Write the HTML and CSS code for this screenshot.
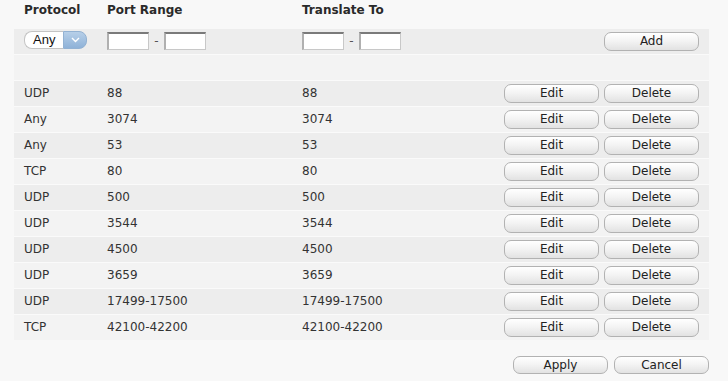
FILE: index.html
```html
<!DOCTYPE html>
<html lang="en">
<head>
    <meta charset="UTF-8">
    <title>Port Forwarding</title>
    <link rel="stylesheet" href="styles.css">
</head>
<body>
    <div class="container">
        <table class="rules">
            <tr class="head">
                <th class="c-proto">Protocol</th>
                <th class="c-range">Port Range</th>
                <th class="c-to">Translate To</th>
                <th class="c-act"></th>
            </tr>
            <tr class="entry">
                <td>
                    <span class="select">
                        <span class="select-value">Any</span>
                        <span class="select-arrow">
                            <svg width="9" height="6" viewBox="0 0 9 6"><path d="M1 1 L4.5 4.5 L8 1" fill="none" stroke="#fff" stroke-width="1.4"/></svg>
                        </span>
                    </span>
                </td>
                <td><input type="text" class="port"><span class="dash">-</span><input type="text" class="port"></td>
                <td><input type="text" class="port"><span class="dash">-</span><input type="text" class="port"></td>
                <td class="act"><button class="btn">Add</button></td>
            </tr>
            <tr class="blank"><td colspan="4"></td></tr>
            <tr><td>UDP</td><td>88</td><td>88</td><td class="act"><button class="btn">Edit</button><button class="btn">Delete</button></td></tr>
            <tr><td>Any</td><td>3074</td><td>3074</td><td class="act"><button class="btn">Edit</button><button class="btn">Delete</button></td></tr>
            <tr><td>Any</td><td>53</td><td>53</td><td class="act"><button class="btn">Edit</button><button class="btn">Delete</button></td></tr>
            <tr><td>TCP</td><td>80</td><td>80</td><td class="act"><button class="btn">Edit</button><button class="btn">Delete</button></td></tr>
            <tr><td>UDP</td><td>500</td><td>500</td><td class="act"><button class="btn">Edit</button><button class="btn">Delete</button></td></tr>
            <tr><td>UDP</td><td>3544</td><td>3544</td><td class="act"><button class="btn">Edit</button><button class="btn">Delete</button></td></tr>
            <tr><td>UDP</td><td>4500</td><td>4500</td><td class="act"><button class="btn">Edit</button><button class="btn">Delete</button></td></tr>
            <tr><td>UDP</td><td>3659</td><td>3659</td><td class="act"><button class="btn">Edit</button><button class="btn">Delete</button></td></tr>
            <tr><td>UDP</td><td>17499-17500</td><td>17499-17500</td><td class="act"><button class="btn">Edit</button><button class="btn">Delete</button></td></tr>
            <tr><td>TCP</td><td>42100-42200</td><td>42100-42200</td><td class="act"><button class="btn">Edit</button><button class="btn">Delete</button></td></tr>
        </table>
        <div class="footer">
            <button class="btn">Apply</button>
            <button class="btn">Cancel</button>
        </div>
    </div>
</body>
</html>
```

FILE: styles.css
```css
body {
    margin: 0;
    padding: 0;
    background: #f8f8f8;
    font-family: 'DejaVu Sans', Verdana, sans-serif;
    font-size: 12px;
    color: #333;
}
.container {
    width: 695px;
    padding-left: 14px;
}
.rules {
    width: 695px;
    border-collapse: collapse;
    table-layout: fixed;
}
.rules th {
    padding: 3px 0 11px 10px;
    line-height: 15px;
    text-align: left;
    font-weight: bold;
    color: #2a2a2a;
    background: #f8f8f8;
}
.c-proto { width: 73px; }
.c-range { width: 185px; }
.c-to { width: 192px; }
.rules tr {
    height: 26px;
}
.rules td {
    padding: 0 0 0 10px;
    border-top: 1px solid #fafafa;
    white-space: nowrap;
    line-height: 15px;
}
.rules tr:nth-child(even) td {
    background: #ededed;
}
.rules tr:nth-child(odd) td {
    background: #f3f3f3;
}
.rules tr.entry {
    height: 25px;
}
.rules tr.entry td {
    border-top: none;
}
.rules td.act {
    text-align: right;
    padding-right: 10px;
}
.select {
    display: inline-flex;
    height: 18px;
    vertical-align: middle;
    margin-top: -2px;
}
.select-value {
    width: 39px;
    box-sizing: border-box;
    padding-left: 8px;
    line-height: 16px;
    font-family: 'Liberation Sans', Arial, sans-serif;
    font-size: 13px;
    color: #111;
    background: #fff;
    border: 1px solid #c4c4c4;
    border-right: none;
    border-radius: 8px 0 0 8px;
}
.select-arrow {
    width: 24px;
    display: flex;
    align-items: center;
    justify-content: center;
    background: linear-gradient(#b7cfe8, #8fb2d8);
    border: 1px solid #93b2d3;
    border-radius: 0 8px 8px 0;
    box-sizing: border-box;
}
.port {
    box-sizing: border-box;
    width: 42px;
    height: 18px;
    margin: 0;
    padding: 0;
    vertical-align: middle;
    background: #fff;
    border: 1px solid #c8c8c8;
    border-top: 2px solid #7a7a7a;
    border-left: 2px solid #b0b0b0;
}
.dash {
    display: inline-block;
    width: 15px;
    text-align: center;
    vertical-align: middle;
    color: #555;
}
.btn {
    box-sizing: border-box;
    width: 95px;
    height: 19px;
    margin: 0;
    padding: 0;
    font-family: 'DejaVu Sans', Verdana, sans-serif;
    font-size: 12px;
    color: #222;
    background: linear-gradient(#ffffff 0%, #f4f4f4 45%, #e2e2e2 100%);
    border: 1px solid #b2b2b2;
    border-radius: 7px;
    vertical-align: middle;
}
.act .btn + .btn {
    margin-left: 5px;
}
.footer {
    display: flex;
    justify-content: flex-end;
    gap: 6px;
    padding-top: 16px;
}
.footer .btn {
    height: 18px;
}
```
